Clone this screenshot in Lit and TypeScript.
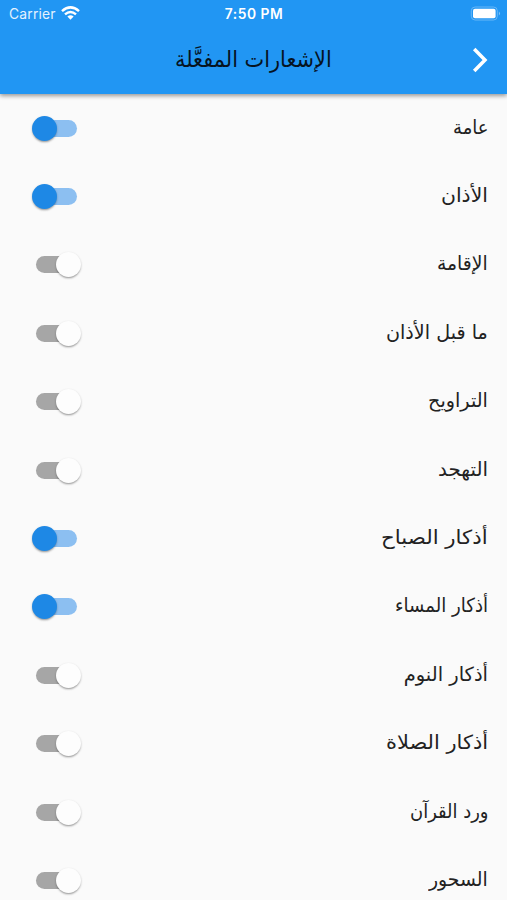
import { LitElement, html, css } from "lit";
import { customElement, property } from "lit/decorators.js";
import { classMap } from "lit/directives/class-map.js";
import { styleMap } from "lit/directives/style-map.js";

interface Item {
  label: string;
  on: boolean;
  width: number;
}

const ITEMS: Item[] = [
  { label: "عامة", on: true, width: 35 },
  { label: "الأذان", on: true, width: 47 },
  { label: "الإقامة", on: false, width: 51 },
  { label: "ما قبل الأذان", on: false, width: 102 },
  { label: "التراويح", on: false, width: 60 },
  { label: "التهجد", on: false, width: 50 },
  { label: "أذكار الصباح", on: true, width: 107 },
  { label: "أذكار المساء", on: true, width: 93 },
  { label: "أذكار النوم", on: false, width: 84 },
  { label: "أذكار الصلاة", on: false, width: 102 },
  { label: "ورد القرآن", on: false, width: 78 },
  { label: "السحور", on: false, width: 59 },
];

/* One line of text whose advance is fitted to a given width. */
@customElement("fit-text")
export class FitText extends LitElement {
  @property() text = "";
  @property({ type: Number }) width = 0;
  @property({ type: Number }) scale = 1;

  static styles = css`
    :host { display: flex; justify-content: flex-start; direction: rtl; }
    span { display: block; flex: none; white-space: nowrap; transform-origin: right center; }
  `;

  protected updated() {
    const span = this.renderRoot.querySelector("span");
    if (span && span.offsetWidth) this.scale = this.width / span.offsetWidth;
  }

  render() {
    return html`<span style=${styleMap({ transform: `scaleX(${this.scale})` })}>${this.text}</span>`;
  }
}

@customElement("toggle-switch")
export class ToggleSwitch extends LitElement {
  @property({ type: Boolean }) on = false;

  static styles = css`
    :host { display: block; }
    .switch { width: 50px; height: 27px; display: grid; align-items: center; }
    .track, .thumb { grid-area: 1 / 1; }
    .track { width: 41px; height: 17px; border-radius: 9px; margin-left: 5px; background: #a6a6a6; }
    .thumb {
      width: 25px; height: 25px; border-radius: 50%; margin-left: 25px; background: #fdfdfd;
      box-shadow: 0 2px 2px -1px rgba(0,0,0,.22), 0 1px 2px rgba(0,0,0,.14), 0 1px 3px rgba(0,0,0,.1);
    }
    .on .track { background: #8cbff1; }
    .on .thumb { margin-left: 1.4px; background: #1e88e5; }
  `;

  render() {
    return html`<div class=${classMap({ switch: true, on: this.on })}>
      <div class="track"></div>
      <div class="thumb"></div>
    </div>`;
  }
}

@customElement("app-root")
export class AppRoot extends LitElement {
  static styles = css`
    :host {
      display: block; height: 900px; overflow: hidden; background: #fafafa;
      font-family: "DejaVu Sans", sans-serif;
    }
    header {
      position: relative; height: 94px; background: #2196f3;
      box-shadow: 0 2px 4px rgba(0,0,0,.3), 0 1px 5px rgba(0,0,0,.14);
    }
    .status {
      height: 28px; display: grid; grid-template-columns: 1fr auto 1fr; align-items: center;
      padding: 0 6px 0 9px; color: #fff; font: 13.8px/28px Inter, sans-serif;
    }
    .carrier { display: flex; align-items: center; gap: 5.5px; color: #e4f2fe; letter-spacing: .22px; }
    .carrier svg { margin-top: -2px; }
    .time { font-weight: 600; font-size: 13.8px; letter-spacing: .5px; margin-right: 2px; }
    .battery { justify-self: end; margin-top: -2px; }
    svg { display: block; }
    .bar {
      height: 64px; display: grid; grid-template-columns: 1fr 156px 1fr; align-items: center;
      padding-right: 17px; padding-left: 17px;
    }
    .title { grid-column: 2; font-size: 23px; line-height: 54px; color: #06131f; padding-bottom: 3px; }
    .next { justify-self: end; }
    .row {
      height: 68.4px; display: flex; align-items: center; justify-content: space-between;
      padding: 0 19px 0 31px;
    }
    .label { font-size: 19.5px; line-height: 30px; color: #222; padding-bottom: 1px; }
  `;

  render() {
    return html`
      <header>
        <div class="status">
          <div class="carrier">
            <span>Carrier</span>
            <svg width="19" height="14" viewBox="0 0 19 14" fill="none" stroke="#fff" stroke-width="2.5">
              <path d="M1 5.1Q9.5-2.3 18 5.1M4 8.4Q9.5 3.7 15 8.4" />
              <path d="M6.4 10.6Q9.5 8 12.6 10.6L9.5 13.8Z" fill="#fff" stroke="none" />
            </svg>
          </div>
          <span class="time">7:50 PM</span>
          <svg class="battery" width="31" height="15" viewBox="0 0 31 15">
            <rect x="1.3" y="1" width="26" height="13" rx="3.8" fill="none" stroke="#68b7f7" />
            <rect x="3" y="2.8" width="22.6" height="9.4" rx="2" fill="#fff" />
            <path d="M28.9 5.5Q31.1 7.5 28.9 9.5Z" fill="#83c3f8" />
          </svg>
        </div>
        <div class="bar">
          <fit-text class="title" text="الإشعارات المفعَّلة" .width=${157}></fit-text>
          <svg class="next" width="20" height="28" viewBox="0 0 20 28" fill="none" stroke="#fff" stroke-width="3.5">
            <path d="M4.2 3L15 14L4.2 25" />
          </svg>
        </div>
      </header>
      <main>
        ${ITEMS.map(
          (item) => html`<div class="row">
            <toggle-switch .on=${item.on}></toggle-switch>
            <fit-text class="label" .text=${item.label} .width=${item.width}></fit-text>
          </div>`
        )}
      </main>
    `;
  }
}
